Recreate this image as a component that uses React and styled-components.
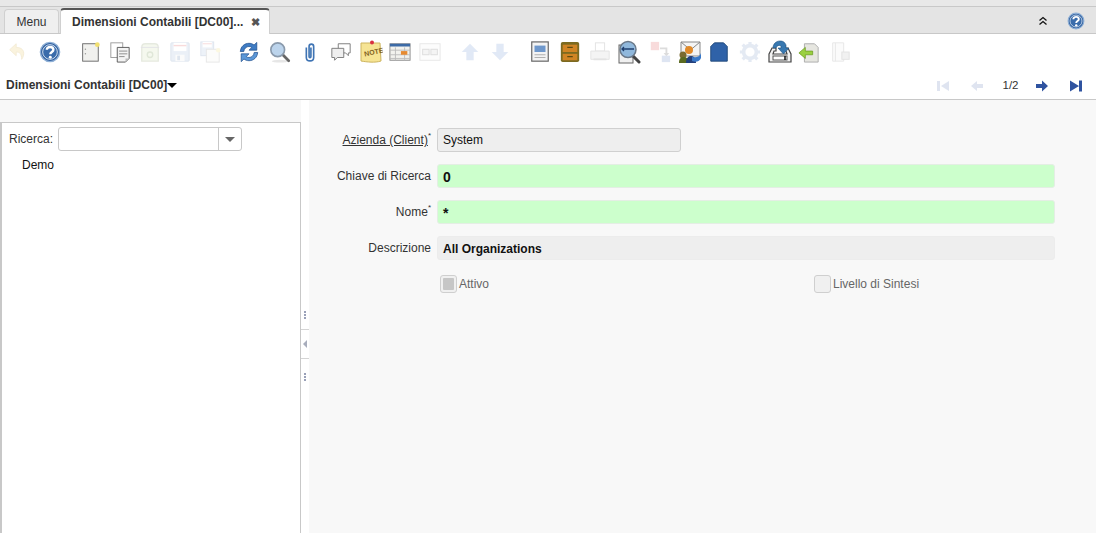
import React from "react";
import styled, { createGlobalStyle } from "styled-components";

const Global = createGlobalStyle`
  html, body { margin: 0; padding: 0; height: 100%; overflow: hidden; background: #f8f8f8; }
  #root { height: 533px; }
  * { box-sizing: border-box; }
`;

const Page = styled.div`
  width: 1096px; height: 533px; display: flex; flex-direction: column; overflow: hidden;
  font-family: "Liberation Sans", Arial, sans-serif; font-size: 12px; color: #333; background: #f8f8f8;
`;
const TopStrip = styled.div`height: 7px; background: #e8e8e8; border-bottom: 1px solid #c8c8c8; flex: none;`;
const TabBar = styled.div`
  height: 27px; flex: none; background: #e4e4e4; border-bottom: 1px solid #c8c8c8;
  display: flex; align-items: flex-end; padding-left: 4px; position: relative;
`;
const Tab = styled.div`
  height: ${p => (p.$active ? "26px" : "24px")};
  width: ${p => (p.$active ? "210px" : "55px")};
  margin-left: ${p => (p.$active ? "1px" : "0")};
  margin-bottom: ${p => (p.$active ? "-1px" : "0")};
  background: ${p => (p.$active ? "#fff" : "#efefef")};
  border: 1px solid #d0d0d0; border-bottom: none;
  border-top: ${p => (p.$active ? "2px solid #555" : "1px solid #d0d0d0")};
  border-radius: 4px 4px 0 0;
  display: flex; align-items: center; gap: 7px;
  justify-content: ${p => (p.$active ? "flex-start" : "center")};
  padding-left: ${p => (p.$active ? "11px" : "0")};
  font-weight: ${p => (p.$active ? 700 : 400)};
  color: #333;
`;
const TabClose = styled.span`font-size: 11px; color: #555; line-height: 1; margin-left: 1px;`;
const TabActions = styled.div`
  margin-left: auto; height: 100%; display: flex; align-items: center; gap: 19px; padding: 2px 11px 0 0;
`;
const Toolbar = styled.div`
  height: 36px; flex: none; background: #fff; display: flex; align-items: center; padding: 0 0 0 3px;
`;
const ToolBtn = styled.div`
  width: 30px; height: 30px; display: flex; align-items: center; justify-content: center;
  margin-left: ${p => p.$gap || 0}px;
  svg { opacity: ${p => (p.$off ? 0.2 : 1)}; }
`;
const CrumbRow = styled.div`
  height: 30px; flex: none; background: #fff; border-bottom: 1px solid #c8c8c8;
  display: flex; align-items: center; padding: 0 0 0 6px;
`;
const Crumb = styled.div`font-weight: 700; display: flex; align-items: center; color: #333;`;
const Caret = styled.span`
  width: 0; height: 0; border-left: 5px solid transparent; border-right: 5px solid transparent;
  border-top: 5px solid #000; margin-top: 1px;
`;
const Pager = styled.div`margin-left: auto; display: flex; align-items: center; padding-right: 3px; margin-top: 3px;`;
const PagerBtn = styled.div`
  width: 34px; height: 20px; display: flex; align-items: center; justify-content: center;
  svg { opacity: ${p => (p.$off ? 0.15 : 1)}; }
`;
const PagerText = styled.div`width: 29px; margin-left: 2px; text-align: center; font-size: 11.5px; margin-top: -2px;`;

const Body = styled.div`flex: 1; display: flex; min-height: 0; padding-top: 22px; background: #f8f8f8;`;
const TreePanel = styled.div`
  width: 301px; flex: none; background: #fff; border: 1px solid #c8c8c8; border-bottom: none; border-left: 2px solid #c8c8c8;
`;
const SearchRow = styled.div`display: flex; align-items: center; height: 24px; margin-top: 4px; padding-left: 7px; gap: 5px;`;
const SearchLabel = styled.span`color: #333;`;
const Combo = styled.div`
  width: 184px; height: 24px; background: #fff; border: 1px solid #c8c8c8; border-radius: 3px; display: flex; justify-content: flex-end;
`;
const ComboBtn = styled.div`
  width: 23px; border-left: 1px solid #c8c8c8; display: flex; align-items: center; justify-content: center;
  &::after { content: ""; border-left: 5px solid transparent; border-right: 5px solid transparent; border-top: 5px solid #666; margin-top: 1px; }
`;
const TreeItem = styled.div`padding: 7px 0 0 20px; color: #111;`;
const Splitter = styled.div`
  width: 8px; flex: none; background: #fff; align-self: stretch; margin-top: -22px;
  display: flex; flex-direction: column; position: relative;
`;
const Handle = styled.div`
  position: absolute; left: 0; width: 8px; height: ${p => p.$h}px; border-bottom: ${p => (p.$line ? "1px solid #d4d4d4" : "none")};
  top: ${p => p.$top}px; display: flex; align-items: center; justify-content: center;
`;
const Dots = styled.span`
  width: 2px; height: 8px;
  background: repeating-linear-gradient(#99a0b8 0 2px, transparent 2px 3px);
`;
const Tri = styled.span`
  border-top: 4px solid transparent; border-bottom: 4px solid transparent; border-right: 4px solid #a8adbc;
`;
const Form = styled.div`
  flex: 1; padding-top: 6px; display: grid; grid-template-columns: 122px 618px; column-gap: 6px;
  grid-auto-rows: 24px; row-gap: 12px; align-content: start;
`;
const Label = styled.label`
  text-align: right; color: #333; padding-top: 5px; white-space: nowrap;
`;
const LinkText = styled.span`text-decoration: underline;`;
const Star = styled.sup`font-size: 8px; line-height: 0; vertical-align: 6px;`;
const Field = styled.div`
  height: 24px; width: ${p => p.$w || "100%"}; border-radius: 3px; padding: ${p => (p.$bold ? "2px" : "0")} 5px 0; display: flex; align-items: center;
  background: ${p => (p.$req ? "#ccffcc" : "#eeeeee")};
  border: 1px solid ${p => (p.$req ? "#e4eee4" : p.$border ? "#d0d0d0" : "#ececec")};
  font-weight: ${p => (p.$bold ? 700 : 400)};
  font-size: ${p => p.$size || 12}px;
  color: #111;
`;
const CheckRow = styled.div`grid-column: 2; display: grid; grid-template-columns: 374px 1fr; height: 24px; padding: 3px 0 0 3px;`;
const Check = styled.div`display: flex; align-items: center; gap: 2px; height: 18px; color: #666;`;
const Box = styled.span`
  width: 17px; height: 18px; border: 1px solid #cfcfcf; border-radius: 3px; background: #f0f0f0; display: flex; align-items: center; justify-content: center;
  ${p => p.$on && `&::after { content: ""; width: 11px; height: 12px; background: #c6c6c6; border-radius: 1px; }`}
`;

const Svg = ({ children, s = 22 }) => (
  <svg width={s} height={s} viewBox="0 0 24 24" fill="none">{children}</svg>
);

const Help = ({ s }) => (
  <Svg s={s}>
    <circle cx="12" cy="12" r="10.5" fill="#2f5f9f" stroke="#8fb0d6" strokeWidth="1.5" />
    <circle cx="12" cy="12" r="8" fill="#3a6cab" stroke="#dfe9f4" strokeWidth="1" />
    <path d="M8.5 9.500c0-2 1.600-3 3.600-3s3.600 1.100 3.600 3c0 2.600-3.400 2.400-3.400 5" stroke="#fff" strokeWidth="2.600" />
    <circle cx="12.300" cy="17.800" r="1.600" fill="#fff" />
  </Svg>
);
const refreshArc = "M2.500 11.500C3 6 7 2.500 12 2.500c2.200 0 4 .7 5.500 1.900L20.500 1.500V10H12l3-3c-.9-.7-1.900-1-3-1-3 0-5.300 2.200-5.700 5.500z";
const Icons = {
  undo: <Svg><path d="M10 3 3 9.500 10 16v-4c4 0 6 2 6 8 4-6 3-13-6-13z" fill="#e8c860" stroke="#c8a030" /></Svg>,
  help: <Help s={22} />,
  newDoc: <Svg><rect x="4" y="3" width="17" height="19" fill="#f1f1ee" stroke="#666" /><circle cx="20" cy="4" r="2.600" fill="#f2e070" /><circle cx="7" cy="9" r=".8" fill="#999"/><circle cx="7" cy="14" r=".8" fill="#999"/></Svg>,
  copy: <Svg><rect x="2" y="2" width="13" height="16" fill="#fff" stroke="#999" /><path d="M9 7h13v12l-4 4H9z" fill="#f3f3f3" stroke="#555" /><path d="M11 11h9M11 14h9M11 17h6" stroke="#888" /><path d="M18 23v-4h4z" fill="#bbb" /></Svg>,
  trash: <Svg><path d="M3 7c0-3 2-4 4-4h10c2 0 4 1 4 4v15H3z" fill="#cfe0b0" stroke="#889868" strokeWidth="1.500"/><path d="M2 7h20" stroke="#778" /><circle cx="12" cy="15" r="3" stroke="#688a40" strokeWidth="1.500" /></Svg>,
  save: <Svg><rect x="2" y="2" width="20" height="20" rx="1" fill="#9db8dc" stroke="#5f80ae" /><rect x="5" y="2" width="14" height="9" fill="#fff" /><path d="M5 5h14" stroke="#e05050" strokeWidth="1.500" /><rect x="7" y="15" width="10" height="7" fill="#eee" /><rect x="9" y="16" width="3" height="5" fill="#5f80ae" /></Svg>,
  saveNew: <Svg><rect x="2" y="1" width="14" height="15" fill="#aac0e0" stroke="#6080b0" /><rect x="4" y="1" width="10" height="6" fill="#fff" /><path d="M4 3h10" stroke="#e05050" /><rect x="8" y="9" width="14" height="14" fill="#f2f2ec" stroke="#888" /><circle cx="21" cy="10" r="2.500" fill="#f2e070" /></Svg>,
  refresh: <Svg><path d={refreshArc} fill="#3f7cc4" stroke="#1f4f8f" strokeWidth=".8"/><path d={refreshArc} fill="#5c98d8" stroke="#1f4f8f" strokeWidth=".8" transform="rotate(180 12 12)"/></Svg>,
  find: <Svg><ellipse cx="12" cy="22" rx="9" ry="1.500" fill="#e6e6e6"/><path d="m14.500 14.500 7 7" stroke="#666" strokeWidth="3" strokeLinecap="round" /><circle cx="9.500" cy="9.500" r="7.500" fill="#bcd4ec" stroke="#8a9aac" strokeWidth="1.800" /></Svg>,
  clip: <Svg><path d="M8 7v11c0 5 8 5 8 0V6c0-3.500-5-3.500-5 0v11c0 1.600 2 1.600 2 0V7" stroke="#3f74b4" strokeWidth="1.800" /></Svg>,
  chat: <Svg><path d="M9 3h13v10h-2v3l-3-3H9z" fill="#fff" stroke="#777" /><path d="M2 8h13v10H8l-3 3v-3H2z" fill="#efefef" stroke="#777" /></Svg>,
  note: <Svg s={24}><path d="M2 3h19l1 18c-6 2-14 1-20 0z" fill="#f6e494" stroke="#cdb45e" /><circle cx="13" cy="2.500" r="2" fill="#d83040" /><text x="5" y="15" fontSize="7" fontWeight="700" fontFamily="Liberation Sans" fill="#806020" transform="rotate(-12 12 12)">NOTE</text></Svg>,
  calendar: <Svg><rect x="1" y="3" width="22" height="18" fill="#f2f2ee" stroke="#8a8a8a" /><rect x="1" y="3" width="22" height="3" fill="#3c6aa6" /><path d="M1 10h22M1 15h22M1 19h22M7 7v14M17 7v14" stroke="#bbb" /><rect x="13" y="11" width="7" height="4" fill="#e68a30" /></Svg>,
  cards: <Svg><rect x="1" y="3" width="22" height="18" fill="#f4f4f4" stroke="#888" /><rect x="4" y="9" width="7" height="6" stroke="#555" fill="#ccc" /><rect x="13" y="9" width="7" height="6" stroke="#555" fill="#ccc" /></Svg>,
  up: <Svg><path d="M12 3 3 12h5v9h8v-9h5z" fill="#6f94d4" /></Svg>,
  down: <Svg><path d="M12 21 3 12h5V3h8v9h5z" fill="#6f94d4" /></Svg>,
  report: <Svg><rect x="3" y="1" width="18" height="21" fill="#f3f3f3" stroke="#666" strokeWidth="1.300" /><rect x="6" y="5" width="12" height="7" fill="#6f98cc" /><path d="M6 15h12M6 18h12" stroke="#aaa" /></Svg>,
  archive: <Svg><rect x="2" y="1" width="20" height="22" rx="2" fill="#7c6a20" /><rect x="4" y="4" width="16" height="8" fill="#d08424" /><rect x="4" y="14" width="16" height="7" fill="#d08424" /><path d="M9 7h6M9 17h6" stroke="#5c4a10" strokeWidth="1.500" /></Svg>,
  print: <Svg><rect x="7" y="2" width="10" height="9" fill="#fff" stroke="#777" /><path d="M2 11h20v9H2z" fill="#ccc" stroke="#777" /><path d="M5 20h14" stroke="#777" strokeWidth="2"/></Svg>,
  zoom: <Svg s={24}><rect x="2" y="5" width="14" height="18" fill="#f0f0f0" stroke="#666" /><path d="m15 15 7 7" stroke="#444" strokeWidth="3" strokeLinecap="round" /><circle cx="11" cy="9.500" r="8" fill="#90b8dc" stroke="#6a7888" strokeWidth="1.500" /><path d="M5 9h12M7 7 5 9l2 2" stroke="#1f3f6f" strokeWidth="1.300" /></Svg>,
  flow: <Svg><rect x="2" y="1" width="9" height="9" fill="#e05050" /><path d="M12 8h7v7" stroke="#555" strokeWidth="2" /><path d="m16 13 3 4 3-4z" fill="#555" /><rect x="14" y="16" width="9" height="7" fill="#6080c0" /></Svg>,
  mail: <Svg s={24}><path d="M3 2h19v14H3z" fill="#f4f4f4" stroke="#888" /><path d="m3 2 9.500 8L22 2" stroke="#888" /><circle cx="11" cy="10" r="4" fill="#e08a2a" /><circle cx="5" cy="15" r="3.500" fill="#7a6a30" /><path d="M1 23c0-5 2-6 5-6s4 2 4 6z" fill="#5a6a20" /><path d="M8 23c0-5 2-7 5-7s5 2 5 7z" fill="#23407c" /><path d="M14 17c4 1 8 0 9-4v5c-1 3-5 5-9 3z" fill="#3878c8" /></Svg>,
  block: <Svg><path d="M3 6l4-4h10l4 4v16H3z" fill="#2f62a8" stroke="#204878" strokeLinejoin="round" /></Svg>,
  gear: <Svg><circle cx="12" cy="12" r="7" stroke="#7c98c8" strokeWidth="4" /><path d="M12 1v4M12 19v4M1 12h4M19 12h4M4 4l3 3M17 17l3 3M20 4l-3 3M7 17l-3 3" stroke="#7c98c8" strokeWidth="3.500" /></Svg>,
  importIc: <Svg s={24}><path d="M1 14 4 8h4v3H6l-1 3h14l-1-3h-2V8h4l3 6v8H1z" fill="#f2f2f2" stroke="#444" strokeWidth="1.200" /><rect x="5" y="16" width="14" height="4" fill="#fff" stroke="#555" /><path d="M17 16v4" stroke="#111" strokeWidth="1.500" /><path d="M5 8c0-4 3-7 7-7s5 2 6 4v3h3l-5.500 6L10 8h3V6c-1-1-4-1-5 2z" fill="#3878b0" stroke="#205080" strokeWidth=".6" /></Svg>,
  exportIc: <Svg><path d="M7 3h11l4 4v16H7z" fill="#e6e6e0" stroke="#aaa" /><path d="M1 13 8 7v4h8v4H8v4z" fill="#9ad040" stroke="#6a9a20" strokeWidth=".8" /></Svg>,
  tpl: <Svg><path d="M4 2h12v20H4z" fill="#eee" stroke="#888" /><path d="M7 2v20" stroke="#888" /><rect x="14" y="12" width="8" height="8" fill="#bbb" stroke="#777" /></Svg>,
};

const tools = [
  ["undo", 0, 1], ["help", 2, 0], ["newDoc", 10, 0], ["copy", 0, 0], ["trash", 0, 1], ["save", 0, 1], ["saveNew", 0, 1],
  ["refresh", 9, 0], ["find", 1, 0], ["clip", 0, 0], ["chat", 1, 0], ["note", 0, 0], ["calendar", -1, 0], ["cards", 0, 1],
  ["up", 10, 1], ["down", 0, 1], ["report", 10, 0], ["archive", 0, 0], ["print", 0, 1], ["zoom", -1, 0], ["flow", 1, 1],
  ["mail", 0, 0], ["block", -1, 0], ["gear", 1, 1], ["importIc", 0, 0], ["exportIc", -1, 0], ["tpl", 1, 1],
];

const First = <svg width="14" height="14" viewBox="0 0 14 14"><path d="M1 2h3v10H1zM13 2v10L5 7z" fill="#2f53a0" /></svg>;
const Prev = <svg width="14" height="14" viewBox="0 0 14 14"><path d="M1 7l6-5v3h6v4H7v3z" fill="#2f53a0" /></svg>;
const Next = <svg width="14" height="14" viewBox="0 0 14 14"><path d="M13 7 7 1.500V5H1v4h6v3.500z" fill="#2f53a0" /></svg>;
const Last = <svg width="14" height="14" viewBox="0 0 14 14"><path d="M1 1.500v11L10 7zM10 1.500h3v11h-3z" fill="#2f53a0" /></svg>;
const Collapse = <svg width="10" height="10" viewBox="0 0 10 10" fill="none"><path d="M1.500 4.500 5 1.500l3.500 3M1.500 8.500 5 5.500l3.500 3" stroke="#111" strokeWidth="1.300" /></svg>;

export default function App() {
  return (
    <Page>
      <Global />
      <TopStrip />
      <TabBar>
        <Tab>Menu</Tab>
        <Tab $active>Dimensioni Contabili [DC00]...<TabClose>✖</TabClose></Tab>
        <TabActions>{Collapse}<Help s={18} /></TabActions>
      </TabBar>
      <Toolbar>
        {tools.map(([k, gap, off], i) => (
          <ToolBtn key={i} $gap={gap} $off={!!off}>{Icons[k]}</ToolBtn>
        ))}
      </Toolbar>
      <CrumbRow>
        <Crumb>Dimensioni Contabili [DC00]<Caret /></Crumb>
        <Pager>
          <PagerBtn $off>{First}</PagerBtn>
          <PagerBtn $off>{Prev}</PagerBtn>
          <PagerText>1/2</PagerText>
          <PagerBtn>{Next}</PagerBtn>
          <PagerBtn>{Last}</PagerBtn>
        </Pager>
      </CrumbRow>
      <Body>
        <TreePanel>
          <SearchRow>
            <SearchLabel>Ricerca:</SearchLabel>
            <Combo><ComboBtn /></Combo>
          </SearchRow>
          <TreeItem>Demo</TreeItem>
        </TreePanel>
        <Splitter>
          <Handle $top={200} $h={30} $line><Dots /></Handle>
          <Handle $top={230} $h={29} $line><Tri /></Handle>
          <Handle $top={261} $h={31}><Dots /></Handle>
        </Splitter>
        <Form>
          <Label><LinkText>Azienda (Client)</LinkText><Star>*</Star></Label>
          <Field $w="244px" $border>System</Field>
          <Label>Chiave di Ricerca</Label>
          <Field $req $bold $size={14}>0</Field>
          <Label>Nome<Star>*</Star></Label>
          <Field $req $bold $size={14}>*</Field>
          <Label>Descrizione</Label>
          <Field $bold>All Organizations</Field>
          <CheckRow>
            <Check><Box $on />Attivo</Check>
            <Check><Box />Livello di Sintesi</Check>
          </CheckRow>
        </Form>
      </Body>
    </Page>
  );
}
